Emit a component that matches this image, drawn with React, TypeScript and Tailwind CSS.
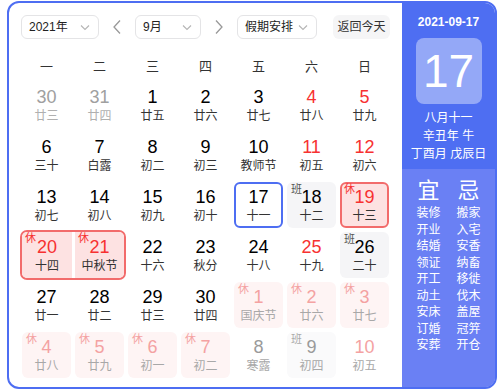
import React from "react";

type Cell = {
  n: string;
  l: string;
  kind?: "prev" | "next";
  red?: boolean;
  tag?: "休" | "班";
  sel?: boolean;
  hb?: boolean; // red bordered holiday
};

const rows: Cell[][] = [
  [
    { n: "30", l: "廿三", kind: "prev" },
    { n: "31", l: "廿四", kind: "prev" },
    { n: "1", l: "廿五" },
    { n: "2", l: "廿六" },
    { n: "3", l: "廿七" },
    { n: "4", l: "廿八", red: true },
    { n: "5", l: "廿九", red: true },
  ],
  [
    { n: "6", l: "三十" },
    { n: "7", l: "白露" },
    { n: "8", l: "初二" },
    { n: "9", l: "初三" },
    { n: "10", l: "教师节" },
    { n: "11", l: "初五", red: true },
    { n: "12", l: "初六", red: true },
  ],
  [
    { n: "13", l: "初七" },
    { n: "14", l: "初八" },
    { n: "15", l: "初九" },
    { n: "16", l: "初十" },
    { n: "17", l: "十一", sel: true },
    { n: "18", l: "十二", tag: "班" },
    { n: "19", l: "十三", tag: "休", red: true, hb: true },
  ],
  [
    { n: "20", l: "十四", tag: "休", red: true },
    { n: "21", l: "中秋节", tag: "休", red: true },
    { n: "22", l: "十六" },
    { n: "23", l: "秋分" },
    { n: "24", l: "十八" },
    { n: "25", l: "十九", red: true },
    { n: "26", l: "二十", tag: "班" },
  ],
  [
    { n: "27", l: "廿一" },
    { n: "28", l: "廿二" },
    { n: "29", l: "廿三" },
    { n: "30", l: "廿四" },
    { n: "1", l: "国庆节", kind: "next", tag: "休", red: true },
    { n: "2", l: "廿六", kind: "next", tag: "休", red: true },
    { n: "3", l: "廿七", kind: "next", tag: "休", red: true },
  ],
  [
    { n: "4", l: "廿八", kind: "next", tag: "休", red: true },
    { n: "5", l: "廿九", kind: "next", tag: "休", red: true },
    { n: "6", l: "初一", kind: "next", tag: "休", red: true },
    { n: "7", l: "初二", kind: "next", tag: "休", red: true },
    { n: "8", l: "寒露", kind: "next" },
    { n: "9", l: "初四", kind: "next", tag: "班" },
    { n: "10", l: "初五", kind: "next", red: true },
  ],
];

const yi = ["装修", "开业", "结婚", "领证", "开工", "动土", "安床", "订婚", "安葬"];
const ji = ["搬家", "入宅", "安香", "纳畜", "移徙", "伐木", "盖屋", "冠笄", "开仓"];

function Chevron() {
  return (
    <svg width="10" height="7" viewBox="0 0 10 7" fill="none" className="shrink-0">
      <path d="M1 1.5 L5 5.5 L9 1.5" stroke="#b5b5b5" strokeWidth="1.1" />
    </svg>
  );
}

function Arrow({ dir }: { dir: "l" | "r" }) {
  return (
    <svg width="10" height="16" viewBox="0 0 10 16" fill="none">
      {dir === "l" ? (
        <path d="M8 1.5 L2 8 L8 14.5" stroke="#999" strokeWidth="1.3" />
      ) : (
        <path d="M2 1.5 L8 8 L2 14.5" stroke="#999" strokeWidth="1.3" />
      )}
    </svg>
  );
}

function Select({ label, w }: { label: string; w: string }) {
  return (
    <div
      className={`${w} h-[24px] flex items-center justify-between pl-[7px] pr-[8px] border border-[#e4e4e6] rounded-[6px] bg-white text-[12px] text-[#222] whitespace-nowrap`}
    >
      <span>{label}</span>
      <Chevron />
    </div>
  );
}

function DayCell({ c }: { c: Cell }) {
  const isNext = c.kind === "next";
  const isPrev = c.kind === "prev";
  let bg = "bg-white";
  let border = "";
  if (c.sel) border = "border-2 border-[#4e6ef2]";
  if (c.hb) {
    bg = "bg-[#fde2e2]";
    border = "border-2 border-[#f26b6b]";
  }
  if (c.tag === "休" && !c.hb) bg = isNext ? "bg-[#fef4f4]" : "bg-[#fde6e6]";
  if (c.tag === "班") bg = isNext ? "bg-[#fafafb]" : "bg-[#f5f5f7]";

  let numColor = "text-[#000]";
  let lunColor = "text-[#333]";
  if (isPrev) {
    numColor = "text-[#a0a0a0]";
    lunColor = "text-[#b0b0b0]";
  } else if (isNext) {
    numColor = c.red ? "text-[#f4a2a2]" : "text-[#9a9a9a]";
    lunColor = "text-[#a8a8a8]";
  } else if (c.red) {
    numColor = "text-[#f73131]";
  }

  let tagColor = "text-[#f73131]";
  if (c.tag === "班") tagColor = isNext ? "text-[#aaa]" : "text-[#555]";
  else if (isNext) tagColor = "text-[#f4a2a2]";

  return (
    <div
      className={`relative w-[49px] h-[46px] rounded-[6px] flex flex-col items-center justify-center ${bg} ${border}`}
    >
      {c.tag && (
        <span
          className={`absolute ${c.hb ? "top-[-1px] left-[2px]" : "top-[1px] left-[4px]"} text-[11px] leading-[12px] ${tagColor}`}
        >
          {c.tag}
        </span>
      )}
      <span className={`text-[18px] leading-[20px] ${numColor}`}>{c.n}</span>
      <span className={`text-[12px] leading-[16px] mt-[1px] ${lunColor}`}>{c.l}</span>
    </div>
  );
}

export default function App() {
  return (
    <div
      className="w-[500px] h-[392px] bg-white pt-[1px] pl-[7px]"
      style={{ fontFamily: '"Liberation Sans", Arial, "Noto Sans CJK SC", sans-serif' }}
    >
      <div className="w-[490px] h-[388px] border-2 border-[#4e6ef2] rounded-[12px] overflow-hidden flex">
        {/* left */}
        <div className="flex-1 pl-[12px] pt-[12px]">
          <div className="flex items-center">
            <Select label="2021年" w="w-[78px]" />
            <div className="w-[36px] flex justify-center">
              <Arrow dir="l" />
            </div>
            <Select label="9月" w="w-[66px]" />
            <div className="w-[36px] flex justify-center">
              <Arrow dir="r" />
            </div>
            <Select label="假期安排" w="w-[80px]" />
            <div className="ml-[16px] h-[24px] w-[57px] rounded-[6px] bg-[#f5f5f6] flex items-center justify-center text-[12px] text-[#333] whitespace-nowrap">
              返回今天
            </div>
          </div>

          <div className="mt-[16px] ml-[1px] grid grid-cols-[repeat(7,49px)] gap-x-[4px] h-[24px] items-center text-[13px] text-[#333]">
            {["一", "二", "三", "四", "五", "六", "日"].map((d) => (
              <div key={d} className="text-center">
                {d}
              </div>
            ))}
          </div>

          <div className="mt-[3px] ml-[1px] flex flex-col gap-[4px]">
            {rows.map((r, ri) =>
              ri === 3 ? (
                <div key={ri} className="flex gap-[4px]">
                  <div className="m-[-2px] border-2 border-[#f26b6b] rounded-[7px] flex gap-[3px] bg-white overflow-hidden">
                    <div className="relative w-[50px] h-[46px] bg-[#fde2e2] flex flex-col items-center justify-center">
                      <span className="absolute top-[0px] left-[3px] text-[11px] leading-[12px] text-[#f73131]">休</span>
                      <span className="text-[18px] leading-[20px] text-[#f73131]">20</span>
                      <span className="text-[12px] leading-[16px] mt-[1px] text-[#333]">十四</span>
                    </div>
                    <div className="relative w-[49px] h-[46px] bg-[#fde2e2] flex flex-col items-center justify-center">
                      <span className="absolute top-[0px] left-[3px] text-[11px] leading-[12px] text-[#f73131]">休</span>
                      <span className="text-[18px] leading-[20px] text-[#f73131]">21</span>
                      <span className="text-[12px] leading-[16px] mt-[1px] text-[#333]">中秋节</span>
                    </div>
                  </div>
                  {r.slice(2).map((c, ci) => (
                    <DayCell key={ci} c={c} />
                  ))}
                </div>
              ) : (
                <div key={ri} className="flex gap-[4px]">
                  {r.map((c, ci) => (
                    <DayCell key={ci} c={c} />
                  ))}
                </div>
              )
            )}
          </div>
        </div>

        {/* right */}
        <div className="w-[93px] bg-[#4e6ef2] flex flex-col text-white">
          <div className="pt-[10px] text-center text-[12px] font-bold leading-[18px]">2021-09-17</div>
          <div className="mt-[7px] mx-auto w-[66px] h-[66px] rounded-[8px] bg-white/40 flex items-center justify-center text-[46px] leading-none">
            17
          </div>
          <div className="mt-[5px] text-center text-[12px] leading-[18px]">
            <div>八月十一</div>
            <div>辛丑年 牛</div>
            <div>丁酉月 戊辰日</div>
          </div>
          <div className="mt-[6px] flex-1 bg-[#6a80f4] flex justify-center gap-[16px] pt-[9px]">
            <div className="flex flex-col items-center">
              <div className="text-[22px] leading-[26px] mb-[1px]">宜</div>
              {yi.map((t) => (
                <div key={t} className="text-[12px] leading-[16.5px]">
                  {t}
                </div>
              ))}
            </div>
            <div className="flex flex-col items-center">
              <div className="text-[22px] leading-[26px] mb-[1px]">忌</div>
              {ji.map((t) => (
                <div key={t} className="text-[12px] leading-[16.5px]">
                  {t}
                </div>
              ))}
            </div>
          </div>
        </div>
      </div>
    </div>
  );
}
